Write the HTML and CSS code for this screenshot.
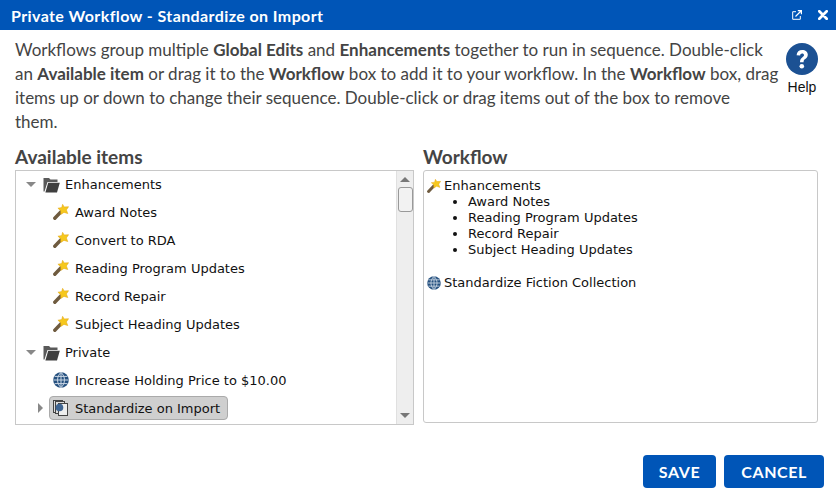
FILE: index.html
```html
<!DOCTYPE html>
<html lang="en">
<head>
    <meta charset="UTF-8">
    <meta name="viewport" content="width=device-width, initial-scale=1.0">
    <title>Private Workflow - Standardize on Import</title>
    <link rel="stylesheet" href="styles.css">
</head>
<body>
    <svg class="icon-defs" width="0" height="0">
        <defs>
            <symbol id="wand" viewBox="0 0 16 16">
                <path d="M1.8 14.2 L8 7.8" stroke="#6f5b3f" stroke-width="3.4" stroke-linecap="round"/>
                <path d="M9.6 0.3 L11.2 2.9 L15.6 2.7 L13.4 5.9 L14.8 9.6 L11 8.4 L7.8 10.4 L7.7 6.7 L4.9 4.2 L8.7 3.6 Z" fill="#f6c81e" stroke="#e3a512" stroke-width="0.5"/>
            </symbol>
            <symbol id="folder" viewBox="0 0 17 17">
                <path d="M0.5 15.5 V2 H6 L7.5 3.6 H14.5 V6 H4.5 L1.5 15.5 Z" fill="#5a5a5a"/>
                <path d="M2.4 16.5 L5.2 6.8 H16.8 L14 16.5 Z" fill="#3f3f3f"/>
            </symbol>
            <symbol id="globe" viewBox="0 0 16 16">
                <circle cx="8" cy="8" r="7.8" fill="#25507f"/>
                <path d="M0.5 8 H15.5 M1.6 4.4 H14.4 M1.6 11.6 H14.4 M8 0.3 V15.7 M8 0.4 C3.4 4.5 3.4 11.5 8 15.6 M8 0.4 C12.6 4.5 12.6 11.5 8 15.6" stroke="#c9d6e4" stroke-width="1" fill="none"/>
            </symbol>
            <symbol id="stack" viewBox="0 0 16 16">
                <rect x="0.5" y="0.5" width="9" height="12" fill="#ddd" stroke="#444"/>
                <rect x="2.5" y="1.5" width="9" height="12" fill="#ddd" stroke="#444"/>
                <rect x="5.5" y="3.5" width="9" height="12" fill="#eee" stroke="#444"/>
                <circle cx="6.5" cy="7.5" r="3.8" fill="#3f6592"/>
            </symbol>
        </defs>
    </svg>

    <div class="dialog">
        <div class="title-bar">
            <span class="title-text">Private Workflow - Standardize on Import</span>
            <span class="title-icons">
                <svg class="popout-icon" viewBox="0 0 10 10" width="10" height="10">
                    <path d="M4 1.7 H0.7 V9.3 H8.3 V6" fill="none" stroke="#fff" stroke-width="1"/>
                    <path d="M3.5 6.5 L9 1 M5.8 0.6 H9.4 V4.2" fill="none" stroke="#fff" stroke-width="1.2"/>
                </svg>
                <svg class="close-icon" viewBox="0 0 10 10" width="10" height="10">
                    <path d="M1.3 1.3 L8.7 8.7 M8.7 1.3 L1.3 8.7" stroke="#fff" stroke-width="2.7" stroke-linecap="round"/>
                </svg>
            </span>
        </div>

        <div class="content">
            <div class="intro">
                <p class="intro-text">Workflows group multiple <b>Global Edits</b> and <b>Enhancements</b> together to run in sequence. Double-click an <b>Available item</b> or drag it to the <b>Workflow</b> box to add it to your workflow. In the <b>Workflow</b> box, drag items up or down to change their sequence. Double-click or drag items out of the box to remove<br>them.</p>
                <div class="help">
                    <svg class="help-icon" viewBox="0 0 32 32" width="32" height="32">
                        <circle cx="16" cy="16" r="16" fill="#1c5193"/>
                        <path d="M10.6 12.2 C10.8 8.9 13 7 16.2 7 C19.4 7 21.8 8.9 21.8 11.8 C21.8 14.2 20.4 15.2 18.9 16.3 C17.8 17.1 17.6 17.8 17.6 19.3 H14 C14 17 14.5 15.7 16.2 14.5 C17.4 13.6 18 13.1 18 12.1 C18 11 17.2 10.4 16.1 10.4 C14.9 10.4 14.2 11.2 14.1 12.5 Z" fill="#fff"/>
                        <circle cx="15.8" cy="23.3" r="2.3" fill="#fff"/>
                    </svg>
                    <span class="help-label">Help</span>
                </div>
            </div>

            <div class="columns">
                <div class="column column-left">
                    <h2>Available items</h2>
                    <div class="tree-box">
                        <ul class="tree">
                            <li class="tree-row"><span class="arrow arrow-open"></span><svg class="tree-icon"><use href="#folder"/></svg><span>Enhancements</span></li>
                            <li class="tree-row child"><svg class="tree-icon"><use href="#wand"/></svg><span>Award Notes</span></li>
                            <li class="tree-row child"><svg class="tree-icon"><use href="#wand"/></svg><span>Convert to RDA</span></li>
                            <li class="tree-row child"><svg class="tree-icon"><use href="#wand"/></svg><span>Reading Program Updates</span></li>
                            <li class="tree-row child"><svg class="tree-icon"><use href="#wand"/></svg><span>Record Repair</span></li>
                            <li class="tree-row child"><svg class="tree-icon"><use href="#wand"/></svg><span>Subject Heading Updates</span></li>
                            <li class="tree-row"><span class="arrow arrow-open"></span><svg class="tree-icon"><use href="#folder"/></svg><span>Private</span></li>
                            <li class="tree-row child"><svg class="tree-icon"><use href="#globe"/></svg><span>Increase Holding Price to $10.00</span></li>
                            <li class="tree-row child"><span class="arrow arrow-closed"></span><span class="selected"><svg class="tree-icon"><use href="#stack"/></svg><span>Standardize on Import</span></span></li>
                        </ul>
                        <div class="scrollbar">
                            <span class="scroll-up"></span>
                            <span class="scroll-thumb"></span>
                            <span class="scroll-down"></span>
                        </div>
                    </div>
                </div>
                <div class="column column-right">
                    <h2>Workflow</h2>
                    <div class="workflow-box">
                        <div class="wf-item"><svg class="wf-icon"><use href="#wand"/></svg><span>Enhancements</span></div>
                        <ul class="wf-list">
                            <li>Award Notes</li>
                            <li>Reading Program Updates</li>
                            <li>Record Repair</li>
                            <li>Subject Heading Updates</li>
                        </ul>
                        <div class="wf-item"><svg class="wf-icon"><use href="#globe"/></svg><span>Standardize Fiction Collection</span></div>
                    </div>
                </div>
            </div>

            <div class="button-row">
                <button class="action-btn save-btn">SAVE</button>
                <button class="action-btn">CANCEL</button>
            </div>
        </div>
    </div>
</body>
</html>
```

FILE: styles.css
```css
html, body {
    margin: 0;
    padding: 0;
    height: 100%;
    overflow: hidden;
}
body {
    background: #fff;
    font-family: Lato, "Open Sans", sans-serif;
    color: #444;
}
.icon-defs {
    display: block;
    height: 0;
}
.dialog {
    display: flex;
    flex-direction: column;
    height: 495px;
}
.title-bar {
    display: flex;
    justify-content: space-between;
    align-items: center;
    height: 30px;
    padding: 0 8px 0 11px;
    background: #0055b7;
    color: #fff;
    font-size: 16px;
    font-weight: 700;
    letter-spacing: 0.4px;
}
.title-icons {
    display: flex;
    align-items: center;
    gap: 16px;
}
.content {
    display: flex;
    flex-direction: column;
    padding: 8px 12px 0 15px;
}
.intro {
    display: flex;
    justify-content: space-between;
}
.intro-text {
    margin: 0;
    width: 765px;
    font-size: 17px;
    line-height: 24px;
}
.intro-text b {
    font-weight: 700;
}
.help {
    display: flex;
    flex-direction: column;
    align-items: center;
    width: 32px;
    margin: 5px 6px 0 0;
    color: #111;
    font-family: "Liberation Sans", Arial, sans-serif;
    font-size: 14px;
}
.help-label {
    margin-top: 4px;
}
.columns {
    display: flex;
    gap: 9px;
    margin-top: 11px;
}
.column-left {
    width: 399px;
}
.column-right {
    width: 395px;
}
h2 {
    margin: 0 0 1px;
    font-size: 19px;
    line-height: 24px;
    font-weight: 700;
}
.tree-box {
    display: flex;
    justify-content: space-between;
    height: 253px;
    border: 1px solid #c8c8c8;
    overflow: hidden;
    color: #111;
    font-family: "DejaVu Sans", Verdana, sans-serif;
    font-size: 13px;
}
.tree {
    list-style: none;
    margin: -1px 0 0;
    padding: 0;
    flex: 1;
}
.tree-row {
    display: flex;
    align-items: center;
    height: 28px;
    padding-left: 10px;
}
.tree-row.child {
    padding-left: 37px;
    position: relative;
}
.tree-icon {
    width: 16px;
    height: 16px;
    flex: none;
    margin-right: 6px;
}
.tree-row:not(.child) .tree-icon {
    width: 17px;
    height: 17px;
    margin: 0 5px 0 7px;
}
.arrow {
    flex: none;
    width: 0;
    height: 0;
}
.arrow-open {
    border-left: 5px solid transparent;
    border-right: 5px solid transparent;
    border-top: 5px solid #888;
}
.arrow-closed {
    position: absolute;
    left: 22px;
    top: 9px;
    border-top: 5px solid transparent;
    border-bottom: 5px solid transparent;
    border-left: 5px solid #888;
}
.selected {
    display: flex;
    align-items: center;
    height: 22px;
    margin-left: -4px;
    padding: 0 7px 0 3px;
    background: #cfcfcf;
    border: 1px solid #aaa;
    border-radius: 4px;
}
.scrollbar {
    position: relative;
    flex: none;
    width: 17px;
    background: #eeeeee;
    border-left: 1px solid #e0e0e0;
    box-sizing: border-box;
}
.scroll-up, .scroll-down {
    position: absolute;
    left: 3px;
    width: 0;
    height: 0;
    border-left: 5px solid transparent;
    border-right: 5px solid transparent;
}
.scroll-up {
    top: 6px;
    border-bottom: 5px solid #777;
}
.scroll-down {
    bottom: 6px;
    border-top: 5px solid #777;
}
.scroll-thumb {
    position: absolute;
    left: 1px;
    top: 16px;
    width: 13px;
    height: 23px;
    background: #f2f2f2;
    border: 1px solid #999;
    border-radius: 3px;
}
.workflow-box {
    box-sizing: border-box;
    height: 253px;
    padding: 7px 3px;
    border: 1px solid #c8c8c8;
    border-radius: 3px;
    color: #111;
    font-family: "DejaVu Sans", Verdana, sans-serif;
    font-size: 13px;
    line-height: 16px;
}
.wf-item {
    display: flex;
    align-items: center;
}
.wf-icon {
    width: 14px;
    height: 14px;
    flex: none;
    margin-right: 3px;
}
.wf-list {
    margin: 0 0 17px;
    padding-left: 41px;
}
.button-row {
    display: flex;
    justify-content: flex-end;
    gap: 8px;
    margin-top: 30px;
}
.action-btn {
    height: 33px;
    padding: 0 17px;
    background: #0055b7;
    color: #fff;
    border: none;
    border-radius: 4px;
    font-family: Lato, sans-serif;
    font-size: 16px;
    font-weight: 700;
    letter-spacing: 0.6px;
}
.save-btn {
    padding: 0 16px;
}
```
